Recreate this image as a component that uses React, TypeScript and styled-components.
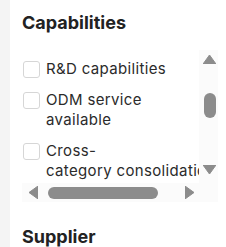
import React from "react"
import styled, { createGlobalStyle } from "styled-components"

const Global = createGlobalStyle`
  html, body { margin: 0; padding: 0; background: #fff; }
  body { font-family: Inter, "Noto Sans", sans-serif; color: #222; }
`

const Page = styled.div`
  display: flex;
  height: 247px;
  overflow: hidden;
`

const Strip = styled.div`
  width: 10px;
  flex: none;
  background: #f4f4f4;
`

const Panel = styled.div`
  flex: 1;
  min-width: 0;
  padding: 12px 8px 0 12px;
`

const Title = styled.h3<{ $gap?: number }>`
  margin: ${p => p.$gap ?? 0}px 0 0;
  font-size: 18px;
  line-height: 22px;
  font-weight: 700;
  color: #222;
`

const ScrollArea = styled.div`
  margin-top: 16px;
  display: grid;
  grid-template-columns: 1fr 17px;
  grid-template-rows: 133px 19px;
  background: #fbfbfb;
`

const Viewport = styled.div`
  overflow: hidden;
  background: #fff;
  margin-right: 2px;
`

const List = styled.ul`
  list-style: none;
  margin: 0;
  padding: 9px 0 0 1px;
  width: 300px;
`

const Row = styled.li`
  display: flex;
  align-items: flex-start;
  gap: 6px;
  margin-bottom: 11px;
`

const Box = styled.span`
  flex: none;
  width: 17px;
  height: 17px;
  margin-top: 2px;
  border: 1px solid #d6d6d6;
  border-radius: 3px;
  background: #fff;
  box-sizing: border-box;
`

const Label = styled.span`
  width: 130px;
  font-size: 15px;
  line-height: 20px;
  letter-spacing: 0.35px;
  color: #2b2b2b;
`

const NoWrap = styled.span`
  white-space: nowrap;
`

const VBar = styled.div`
  display: flex;
  flex-direction: column;
  align-items: center;
  padding: 5px 0 9px;
`

const VTrack = styled.div`
  flex: 1;
`

const HBar = styled.div`
  display: flex;
  align-items: center;
  padding: 0 7px 0 7px;
`

const HTrack = styled.div`
  flex: 1;
  display: flex;
  align-items: center;
`

const Thumb = styled.div<{ $vertical?: boolean; $offset: number; $length: number }>`
  background: #8c8c8c;
  border-radius: 6px;
  ${p =>
    p.$vertical
      ? `width: 12px; height: ${p.$length}px; margin-top: ${p.$offset}px;`
      : `height: 12px; width: ${p.$length}px; margin-left: ${p.$offset}px;`}
`

const Corner = styled.div``

type Dir = "up" | "down" | "left" | "right"

const Arrow = ({ dir }: { dir: Dir }) => {
  const vertical = dir === "up" || dir === "down"
  const w = vertical ? 13 : 9
  const h = vertical ? 9 : 13
  const pts = {
    up: "6.5,0 13,9 0,9",
    down: "0,0 13,0 6.5,9",
    left: "0,6.5 9,0 9,13",
    right: "0,0 9,6.5 0,13",
  }[dir]
  return (
    <svg width={w} height={h} viewBox={`0 0 ${w} ${h}`} style={{ flex: "none", display: "block" }}>
      <polygon points={pts} fill="#8c8c8c" strokeLinejoin="round" stroke="#8c8c8c" strokeWidth="1" />
    </svg>
  )
}

const items: React.ReactNode[] = [
  "R&D capabilities",
  "ODM service available",
  <>Cross-<NoWrap>category consolidation</NoWrap></>,
]

export default function App() {
  return (
    <Page>
      <Global />
      <Strip />
      <Panel>
        <Title>Capabilities</Title>
        <ScrollArea>
          <Viewport>
            <List>
              {items.map((it, i) => (
                <Row key={i}>
                  <Box />
                  <Label>{it}</Label>
                </Row>
              ))}
            </List>
          </Viewport>
          <VBar>
            <Arrow dir="up" />
            <VTrack>
              <Thumb $vertical $offset={29} $length={25} />
            </VTrack>
            <Arrow dir="down" />
          </VBar>
          <HBar>
            <Arrow dir="left" />
            <HTrack>
              <Thumb $offset={10} $length={110} />
            </HTrack>
            <Arrow dir="right" />
          </HBar>
          <Corner />
        </ScrollArea>
        <Title $gap={24}>Supplier</Title>
      </Panel>
    </Page>
  )
}
